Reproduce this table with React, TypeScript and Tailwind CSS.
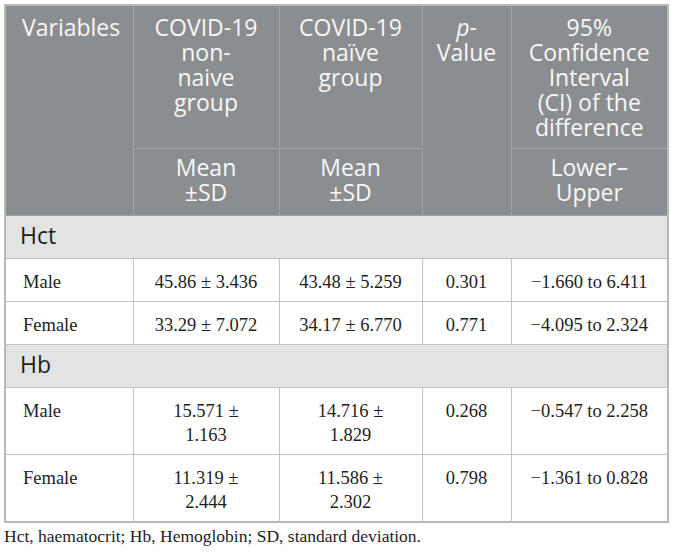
import React from 'react';

const sans = { fontFamily: '"Open Sans", "Noto Sans", sans-serif' };
const serif = { fontFamily: '"Liberation Serif", "Times New Roman", serif' };

interface DataRow {
  label: string;
  nonNaive: React.ReactNode;
  naive: React.ReactNode;
  p: string;
  ci: string;
}

const sections: { name: string; rows: DataRow[] }[] = [
  {
    name: 'Hct',
    rows: [
      { label: 'Male', nonNaive: '45.86 ± 3.436', naive: '43.48 ± 5.259', p: '0.301', ci: '−1.660 to 6.411' },
      { label: 'Female', nonNaive: '33.29 ± 7.072', naive: '34.17 ± 6.770', p: '0.771', ci: '−4.095 to 2.324' }
    ]
  },
  {
    name: 'Hb',
    rows: [
      {
        label: 'Male',
        nonNaive: <>15.571 ±<br />1.163</>,
        naive: <>14.716 ±<br />1.829</>,
        p: '0.268',
        ci: '−0.547 to 2.258'
      },
      {
        label: 'Female',
        nonNaive: <>11.319 ±<br />2.444</>,
        naive: <>11.586 ±<br />2.302</>,
        p: '0.798',
        ci: '−1.361 to 0.828'
      }
    ]
  }
];

const th = 'border border-[#a1a4a5] align-top text-center font-normal';
const td = 'border border-[#c2c3c2] align-top pt-[11px] pb-[7px] leading-[24px] text-[18.5px] text-[#1e1e1e]';

export default function App() {
  return (
    <div className="bg-white w-[674px] h-[555px] pl-[4px] pt-[4px]">
      <div className="w-[665px] border-2 border-[#b6bab4]">
        <table className="w-[661px] table-fixed border-collapse border-hidden">
          <colgroup>
            <col className="w-[127px]" />
            <col className="w-[146px]" />
            <col className="w-[143px]" />
            <col className="w-[89px]" />
            <col className="w-[156px]" />
          </colgroup>
          <thead className="bg-[#8b8e90] text-[#f7f7f7] text-[23px] leading-[25px]" style={sans}>
            <tr>
              <th rowSpan={2} className={`${th} text-left pl-[16px] pt-[9px]`}>Variables</th>
              <th className={`${th} pt-[9px] pb-[8px]`}>COVID-19<br />non-<br />naive<br />group</th>
              <th className={`${th} pt-[9px] pb-[8px]`}>COVID-19<br />naïve<br />group</th>
              <th rowSpan={2} className={`${th} pt-[9px]`}><i>p</i>-<br />Value</th>
              <th className={`${th} pt-[9px] pb-[8px]`}>95%<br />Confidence<br />Interval<br />(CI) of the<br />difference</th>
            </tr>
            <tr>
              <th className={`${th} pt-[6px] pb-[10px]`}>Mean<br />±SD</th>
              <th className={`${th} pt-[6px] pb-[10px]`}>Mean<br />±SD</th>
              <th className={`${th} pt-[6px] pb-[10px]`}>Lower–<br />Upper</th>
            </tr>
          </thead>
          <tbody>
            {sections.map(section => (
              <React.Fragment key={section.name}>
                <tr className="bg-[#e2e3e3]">
                  <td
                    colSpan={5}
                    className="border border-[#c2c3c2] pl-[14px] pt-[7px] pb-[10px] text-[23px] leading-[25px] text-[#1e1e1e]"
                    style={sans}
                  >
                    {section.name}
                  </td>
                </tr>
                {section.rows.map(row => (
                  <tr key={section.name + row.label} style={serif}>
                    <td className={`${td} pl-[17px]`}>{row.label}</td>
                    <td className={`${td} text-center`}>{row.nonNaive}</td>
                    <td className={`${td} text-center`}>{row.naive}</td>
                    <td className={`${td} text-center`}>{row.p}</td>
                    <td className={`${td} text-center`}>{row.ci}</td>
                  </tr>
                ))}
              </React.Fragment>
            ))}
          </tbody>
        </table>
      </div>
      <p className="mt-[3px] text-[17.5px] leading-[20px] text-[#1e1e1e]" style={serif}>
        Hct, haematocrit; Hb, Hemoglobin; SD, standard deviation.
      </p>
    </div>
  );
}
